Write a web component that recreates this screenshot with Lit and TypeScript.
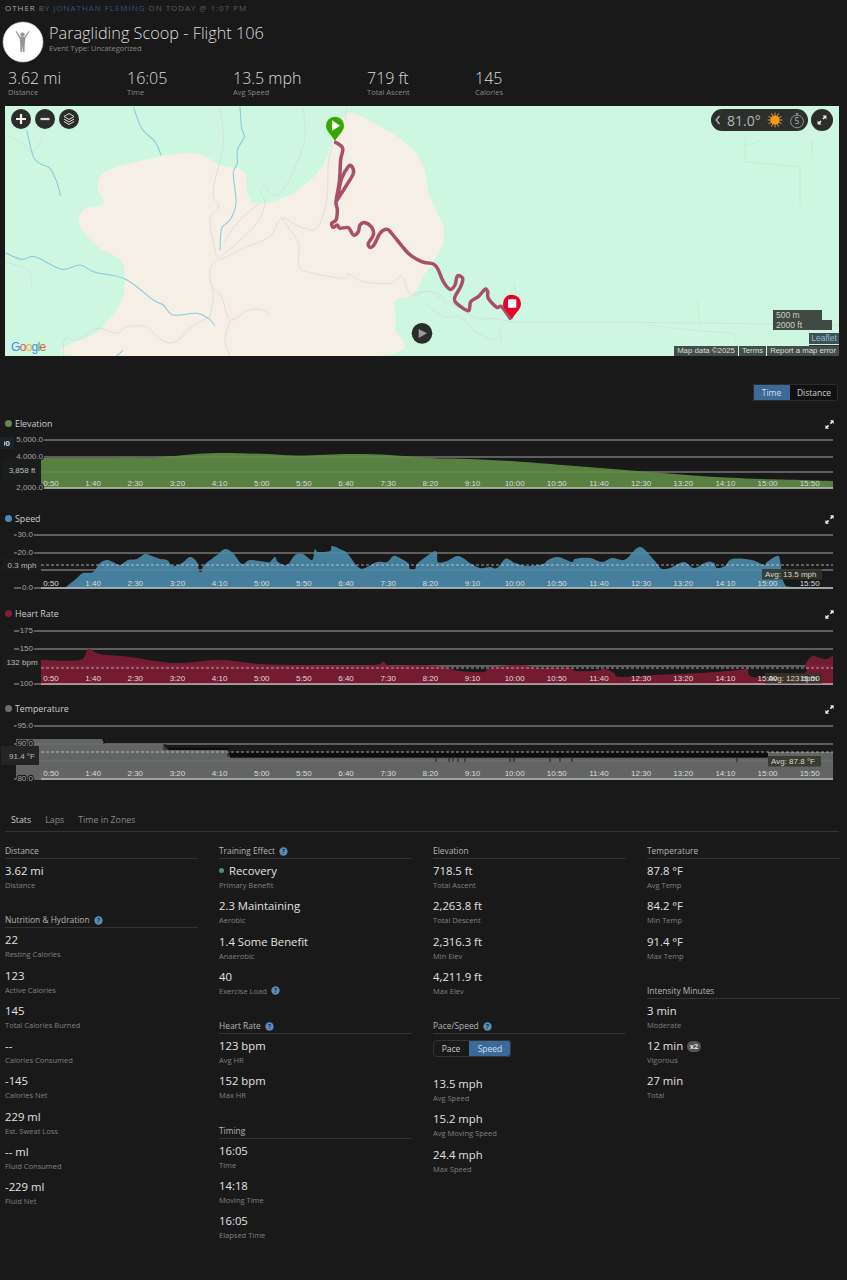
import { LitElement, css, html, svg } from 'lit'
import { customElement, property } from 'lit/decorators.js'

type Pt = [number, number]

const TICKS = ['0:50', '1:40', '2:30', '3:20', '4:10', '5:00', '5:50', '6:40', '7:30', '8:20', '9:10', '10:00', '10:50', '11:40', '12:30', '13:20', '14:10', '15:00', '15:50']

// catmull-rom through the points, traced lines in the reference are soft
const smooth = (p: Pt[], closed = false) => {
  const at = (i: number): Pt => (closed ? p[(i + p.length) % p.length] : p[Math.max(0, Math.min(p.length - 1, i))])
  let d = `M${p[0][0]} ${p[0][1]}`
  const n = closed ? p.length : p.length - 1
  for (let i = 0; i < n; i++) {
    const [p0, p1, p2, p3] = [at(i - 1), at(i), at(i + 1), at(i + 2)]
    const c1 = [p1[0] + (p2[0] - p0[0]) / 6, p1[1] + (p2[1] - p0[1]) / 6]
    const c2 = [p2[0] - (p3[0] - p1[0]) / 6, p2[1] - (p3[1] - p1[1]) / 6]
    d += `C${c1[0].toFixed(1)} ${c1[1].toFixed(1)} ${c2[0].toFixed(1)} ${c2[1].toFixed(1)} ${p2[0]} ${p2[1]}`
  }
  return closed ? d + 'Z' : d
}

const parse = (s: string): Pt[] => {
  const n = s.match(/[\d.]+/g)!.map(Number)
  const out: Pt[] = []
  for (let i = 0; i < n.length; i += 2) out.push([n[i], n[i + 1]])
  return out
}

const helpIcon = html`<svg class="help" viewBox="0 0 10 10"><circle cx="5" cy="5" r="4.6" fill="#5a8dbd"></circle><text x="5" y="7.4" text-anchor="middle" font-size="7" font-weight="700" fill="#1c2c3c" font-family="Open Sans, sans-serif">?</text></svg>`

const expandIcon = html`<svg class="expand" viewBox="0 0 10 10"><path d="M5.6 0.4H9.6V4.4L8.2 3L6.6 4.6L5.4 3.4L7 1.8ZM4.4 9.6H0.4V5.6L1.8 7L3.4 5.4L4.6 6.6L3 8.2Z" fill="#eee"></path></svg>`

@customElement('line-chart')
class LineChart extends LitElement {
  @property() name = ''
  @property() color = '#888'
  @property({ type: Array }) points: Pt[] = []
  @property({ type: Array }) grid: [number, string][] = []
  @property({ type: Boolean }) stepped = false
  @property({ type: Number }) lineStart = 14
  @property({ type: Number }) bottom = 61
  @property({ type: Number }) tickY = 56
  @property({ type: Number }) avgY = 0
  @property() avg = ''
  @property({ type: Array }) avgBox: number[] = []
  @property() cursor = ''
  @property({ type: Array }) cursorBox: number[] = []
  @property({ attribute: false }) extra: unknown = null

  render() {
    const top = this.stepped ? 'M' + this.points.map((p) => p.join(' ')).join('L') : smooth(this.points)
    const area = `${top}L833 ${this.bottom}L${this.points[0][0]} ${this.bottom}Z`
    return html`
      <div class="title"><i style="background:${this.color}"></i><span>${this.name}</span>${expandIcon}</div>
      <svg class="plot" viewBox="0 0 847 66" width="847" height="66">
        ${this.grid.map(([y]) => svg`<line x1=${this.lineStart} x2="833" y1=${y} y2=${y} class="gl"></line>`)}
        <path d=${area} fill=${this.color} fill-opacity=".9"></path>
        ${this.extra}
        <line x1="41" x2="833" y1=${this.bottom} y2=${this.bottom} class="gl strong"></line>
        ${this.avgY
          ? svg`<line x1="41" x2="833" y1=${this.avgY} y2=${this.avgY} stroke="#ddd" stroke-opacity=".7" stroke-width="1" stroke-dasharray="3 2"></line>`
          : ''}
        ${this.grid.map(([y, t]) =>
          t ? svg`<text x=${this.lineStart + 19} y=${y + 1.8} class="yl" text-anchor="end">${t}</text>` : ''
        )}
        ${this.avg
          ? svg`<rect x=${this.avgBox[0]} y=${this.avgBox[1]} width=${this.avgBox[2]} height="10.5" fill="#33342a" fill-opacity=".85"></rect>`
          : ''}
        ${TICKS.map((t, i) => svg`<text x=${51 + i * 42.15} y=${this.tickY} class="tl" text-anchor="middle">${t}</text>`)}
        ${this.avg ? svg`<text x=${this.avgBox[0] + 3} y=${this.avgBox[1] + 8} class="av">${this.avg}</text>` : ''}
        <rect x=${this.cursorBox[0]} y=${this.cursorBox[1]} width="38" height=${this.cursorBox[2]} fill=${this.cursorBox[3] ? '#232423' : '#1b1d1b'}></rect>
        <text x="22" y=${this.cursorBox[1] + this.cursorBox[2] / 2 + 3} class="cur" text-anchor="middle">${this.cursor}</text>
      </svg>
    `
  }

  static styles = css`
    :host {
      display: block;
      height: 95px;
    }
    .title {
      display: flex;
      align-items: center;
      height: 17px;
      font: 8.8px 'Open Sans', sans-serif;
      color: #ccc;
      padding-left: 5px;
      position: relative;
    }
    .title i {
      width: 7px;
      height: 7px;
      border-radius: 50%;
      margin-right: 3px;
    }
    .expand {
      position: absolute;
      left: 825px;
      top: 5px;
      width: 9px;
      height: 9px;
    }
    .plot {
      display: block;
    }
    .gl {
      stroke: #d8d8d8;
      stroke-opacity: 0.72;
      stroke-width: 1;
    }
    .strong {
      stroke-width: 1.5;
    }
    text {
      font-family: 'Liberation Sans', Arial, sans-serif;
    }
    .yl {
      font-size: 8px;
      fill: #a5a5a5;
      stroke: #191919;
      stroke-width: 2.5px;
      paint-order: stroke;
    }
    .tl {
      font-size: 8px;
      fill: #dcdcdc;
    }
    .av {
      font-size: 8px;
      fill: #d8d8d0;
    }
    .cur {
      font-size: 8px;
      fill: #bbb;
    }
  `
}

const shift = (pts: Pt[], top: number): Pt[] => pts.map(([x, y]) => [x, y - top])

const ELEV: Pt[] = [[41, 458], [100, 458], [130, 457.5], [150, 458], [173, 456], [217, 453], [267, 454], [300, 455.5], [350, 454], [390, 455], [430, 458], [470, 459], [510, 461], [550, 464], [600, 468], [650, 472], [700, 476], [760, 479], [800, 480], [833, 481]]

const SPEED: Pt[] = [[65, 588], [77, 578], [83, 573], [93, 572], [100, 563], [107, 560], [113, 562], [120, 565], [128, 560], [137, 559], [145, 554], [152, 556], [160, 559], [167, 560], [173, 566], [182, 563], [190, 557], [197, 562], [199, 571], [202, 571], [204, 565], [217, 555], [225, 549], [233, 553], [242, 564], [250, 560], [267, 562], [270, 562], [275, 557], [278, 562], [287, 565], [295, 555], [303, 554], [312, 560], [315, 549], [318, 552], [330, 551], [332, 546], [342, 550], [347, 553], [358, 567], [365, 568], [377, 562], [387, 562], [393, 556], [398, 557], [408, 563], [410, 569], [415, 569], [418, 563], [433, 552], [437, 553], [438, 562], [447, 561], [457, 556], [463, 558], [470, 563], [480, 568], [490, 567], [497, 568], [505, 559], [510, 560], [515, 563], [527, 566], [543, 564], [548, 560], [558, 557], [572, 562], [575, 559], [590, 558], [602, 562], [612, 558], [624, 560], [632, 553], [637, 548], [643, 548], [654, 560], [662, 569], [670, 568], [684, 562], [694, 568], [707, 562], [714, 563], [717, 568], [725, 566], [732, 559], [752, 560], [764, 565], [767, 562], [777, 556], [780, 560], [784, 583], [794, 587], [833, 588]]

const HEART: Pt[] = [[41, 660], [80, 660], [88, 649], [100, 654], [130, 657], [175, 663], [220, 660], [260, 664], [300, 665], [372, 665], [383, 661.5], [390, 665.5], [420, 665], [443, 667], [460, 671], [483, 672], [490, 668], [513, 665], [530, 666], [537, 668], [570, 668], [575, 671], [594, 671], [605, 669], [614, 673], [620, 677], [654, 675], [700, 673], [740, 670], [747, 668], [750, 676], [764, 677], [804, 673], [805, 665], [812, 656], [820, 658], [827, 659], [832, 656], [833, 656]]

const TEMP: Pt[] = [[16, 739], [102, 739], [105, 744], [163, 744], [168, 750], [227, 750], [230, 757.5], [767, 757.5], [768, 752], [833, 752]]

// dark band and the short marks under the temperature steps
const tempMarks = svg`
  <rect x="230" y="35" width="538" height="5.5" fill="#0d0d0d"></rect>
  <rect x="168" y="31" width="60" height="2" fill="#0d0d0d"></rect>
  ${[[104, 22, 27], [164, 27, 33], [166, 27, 33], [228, 34, 40]].map(
    ([x, a, b]) => svg`<line x1=${x} x2=${x} y1=${a} y2=${b} stroke="#151515" stroke-width="1"></line>`
  )}
  ${[436, 449, 453, 458, 465, 510, 514, 550, 560, 572, 737].map(
    (x) => svg`<line x1=${x} x2=${x} y1="40" y2="45" stroke="#222" stroke-width="1"></line>`
  )}
`

// clipped y axis label that sticks out at the left of the elevation chart
const elevMarks = svg`
  <rect x="0" y="5" width="14" height="12" fill="#16242d"></rect>
  <svg x="4" y="5" width="8" height="12"><text x="-3" y="8.8" font-size="8" font-weight="700" fill="#ddd">00</text></svg>
`

const routeMain = '107,97 128,115 122,150 118,215 108,275 112,300 108,330 95,340 100,352 112,345 120,355 145,353 160,375 175,365 180,345 195,338 215,352 220,375 205,400 210,412 222,405 240,370 260,358 275,370 325,430 365,455 400,462 415,480 430,515 450,538 465,525 472,498 488,505 482,530 465,560 468,578 505,602 512,575 535,560 555,538 563,545 565,565 590,592 605,590 630,625'
const routeLoop = '110,272 140,225 160,190 155,168 145,170 125,205 115,250'

const TAN = 'M1045 38L1150 85L1230 140L1270 200L1290 290L1330 380L1325 440L1270 530L1240 585L1185 605L1185 680L1130 768L230 768L300 690L365 600L368 490L300 445L240 380L250 330L310 310L292 255L340 205L565 158L660 195L730 215L745 290L780 310L870 285L960 210L1000 120'

const RIVERS = [
  'M80 90L100 170L122 192L150 205L170 245L182 288',
  'M400 20L425 85L465 125L483 165',
  'M720 20L725 85L733 110L712 150L712 190L700 220L708 310L690 360L665 385L660 450',
  'M15 458L65 478L105 470L185 508L240 495L285 517L375 537L460 600L490 615L520 645L590 640L625 655L645 677',
  'M350 768L368 752',
]

const ROADS = [
  'M660 20L670 130L645 240L640 290L655 320L630 360L645 450L650 470',
  'M910 25L915 110L890 190L850 270L815 285L795 258L782 275L795 310L770 370L710 430L650 480L630 510L635 560L640 590L630 650',
  'M1040 25L1035 60',
  'M1000 130L985 190L980 300L950 385L900 380L845 355L810 410L740 440L660 480',
  'M845 355L895 430L895 490L920 515L1030 535L1045 522L1090 545L1170 550L1205 530L1235 585L1290 575L1350 620',
  'M635 560L665 590L690 660L745 630L790 630L805 645',
  'M690 660L675 720L690 768',
  'M630 650L575 680L520 728L470 710L440 680L380 680L350 700L295 685L230 720L195 715L190 768',
  'M20 105L60 125L100 155L130 105L135 90',
  'M15 485L75 505L95 530L92 560',
  'M780 310L720 360L670 430',
  'M1240 580L1300 575L1370 620L1430 655L1475 655L1535 665',
  'M1275 610L1330 650L1380 650L1420 690L1480 720L1500 690L1510 670',
  'M1500 730L1505 690',
  'M1540 550L1548 575L1540 600',
  'M1530 666L2000 668L2517 675',
]

// very faint section lines on the green to the right
const FAINT = [
  'M2235 105L2235 180',
  'M2235 186L2400 200L2400 315',
  'M2235 138L2280 122',
  'M2436 120L2436 174',
  'M2091 600L2100 675',
  'M1940 675L2100 693L2200 699L2220 768',
]

type Stat = { v: string; l: string; help?: boolean; dot?: boolean; badge?: string }
type Section = { title: string; help?: boolean; items?: Stat[]; gap: number; toggle?: boolean }

const s = (v: string, l: string, extra: Partial<Stat> = {}): Stat => ({ v, l, ...extra })

const COLUMNS: Section[][] = [
  [
    { title: 'Distance', gap: 0, items: [s('3.62 mi', 'Distance')] },
    {
      title: 'Nutrition & Hydration',
      help: true,
      gap: 15,
      items: [
        s('22', 'Resting Calories'),
        s('123', 'Active Calories'),
        s('145', 'Total Calories Burned'),
        s('--', 'Calories Consumed'),
        s('-145', 'Calories Net'),
        s('229 ml', 'Est. Sweat Loss'),
        s('-- ml', 'Fluid Consumed'),
        s('-229 ml', 'Fluid Net'),
      ],
    },
  ],
  [
    {
      title: 'Training Effect',
      help: true,
      gap: 0,
      items: [
        s('Recovery', 'Primary Benefit', { dot: true }),
        s('2.3 Maintaining', 'Aerobic'),
        s('1.4 Some Benefit', 'Anaerobic'),
        s('40', 'Exercise Load', { help: true }),
      ],
    },
    { title: 'Heart Rate', help: true, gap: 15, items: [s('123 bpm', 'Avg HR'), s('152 bpm', 'Max HR')] },
    { title: 'Timing', gap: 15, items: [s('16:05', 'Time'), s('14:18', 'Moving Time'), s('16:05', 'Elapsed Time')] },
  ],
  [
    {
      title: 'Elevation',
      gap: 0,
      items: [s('718.5 ft', 'Total Ascent'), s('2,263.8 ft', 'Total Descent'), s('2,316.3 ft', 'Min Elev'), s('4,211.9 ft', 'Max Elev')],
    },
    {
      title: 'Pace/Speed',
      help: true,
      gap: 15,
      toggle: true,
      items: [s('13.5 mph', 'Avg Speed'), s('15.2 mph', 'Avg Moving Speed'), s('24.4 mph', 'Max Speed')],
    },
  ],
  [
    { title: 'Temperature', gap: 0, items: [s('87.8 °F', 'Avg Temp'), s('84.2 °F', 'Min Temp'), s('91.4 °F', 'Max Temp')] },
    {
      title: 'Intensity Minutes',
      gap: 15,
      items: [s('3 min', 'Moderate'), s('12 min', 'Vigorous', { badge: 'x2' }), s('27 min', 'Total')],
    },
  ],
]

const METRICS = [
  ['3.62 mi', 'Distance', 119],
  ['16:05', 'Time', 106],
  ['13.5 mph', 'Avg Speed', 134],
  ['719 ft', 'Total Ascent', 108],
  ['145', 'Calories', 100],
] as const

@customElement('app-root')
class AppRoot extends LitElement {
  renderMap() {
    return html`
      <div class="map">
        <svg class="canvas" viewBox="15 18 2502 750" width="834" height="250">
          <rect x="15" y="18" width="2502" height="750" fill="#cdf7e0"></rect>
          <path d=${smooth(parse(TAN), true)} fill="#f5efe6"></path>
          ${FAINT.map((d) => svg`<path d=${d} fill="none" stroke="#bfeacf" stroke-width="2"></path>`)}
          ${ROADS.map((d) => svg`<path d=${smooth(parse(d))} fill="none" stroke="#d2dcd6" stroke-width="2.2"></path>`)}
          ${RIVERS.map((d) => svg`<path d=${smooth(parse(d))} fill="none" stroke="#88cbe0" stroke-width="3.2"></path>`)}
          <g transform="translate(900 30)" fill="none" stroke="#a94f68" stroke-width="10.5" stroke-linejoin="round" stroke-linecap="round">
            <path d=${smooth(parse(routeMain))}></path>
            <path d=${smooth(parse(routeLoop))}></path>
          </g>
          <g transform="translate(1005 51)">
            <path d="M0 73C-8 54 -27 44 -27 26A27 27 0 0 1 27 26C27 44 8 54 0 73Z" fill="#37a800"></path>
            <path d="M-9 10L15 26L-9 41Z" fill="#fff"></path>
          </g>
          <g transform="translate(1536 585)">
            <path d="M0 73C-8 54 -27 44 -27 26A27 27 0 0 1 27 26C27 44 8 54 0 73Z" fill="#e8002c"></path>
            <rect x="-12" y="13" width="25" height="25" rx="2" fill="#fff"></rect>
          </g>
          <circle cx="1266" cy="700" r="31" fill="#2b2d2b"></circle>
          <path d="M1256 687L1281 700L1256 714Z" fill="#9a9a9a"></path>
        </svg>

        <div class="ctrls">
          <button>
            <svg viewBox="0 0 20 20"><path d="M10 5V15M5 10H15" stroke="#eee" stroke-width="2.2"></path></svg>
          </button>
          <button>
            <svg viewBox="0 0 20 20"><path d="M5.5 10H14.5" stroke="#ddd" stroke-width="2.2"></path></svg>
          </button>
          <button>
            <svg viewBox="0 0 20 20" fill="none" stroke="#ddd" stroke-width="1">
              <path d="M10 4.5L15 7.5L10 10.5L5 7.5Z"></path>
              <path d="M5 10L10 13L15 10"></path>
              <path d="M5 12.5L10 15.5L15 12.5"></path>
            </svg>
          </button>
        </div>

        <div class="weather">
          <svg class="chev" viewBox="0 0 6 10"><path d="M4.5 1L1.2 5L4.5 9" fill="none" stroke="#bbb" stroke-width="1.3"></path></svg>
          <span class="deg">81.0°</span>
          <svg class="sun" viewBox="0 0 16 16">
            <g stroke="#d8a04a" stroke-width=".9">
              ${[0, 30, 60, 90, 120, 150].map(
                (a) => svg`<line x1="0.6" y1="8" x2="15.4" y2="8" transform="rotate(${a} 8 8)"></line>`
              )}
            </g>
            <circle cx="8" cy="8" r="4.6" fill="#ff9a10"></circle>
          </svg>
          <span class="timer">
            <svg viewBox="0 0 16 16"><circle cx="8" cy="8.4" r="6.4" fill="none" stroke="#999" stroke-width=".9"></circle><path d="M8 .6V3" stroke="#999"></path><path d="M6.6.6H9.4" stroke="#999" stroke-width=".8"></path></svg>
            <b>5</b>
          </span>
        </div>
        <button class="full">
          <svg viewBox="0 0 10 10"><path d="M5.6 0.6H9.4V4.4L8.1 3.1L6.6 4.6L5.4 3.4L6.9 1.9ZM4.4 9.4H0.6V5.6L1.9 6.9L3.4 5.4L4.6 6.6L3.1 8.1Z" fill="#eee"></path></svg>
        </button>

        <div class="scale">
          <div style="width:49px">500 m</div>
          <div style="width:59px">2000 ft</div>
        </div>
        <div class="leaflet">Leaflet</div>
        <div class="leaflet-dark"></div>
        <div class="attrib"><span>Map data ©2025</span><span>Terms</span><span>Report a map error</span></div>
        <div class="google"><span style="color:#4a84e8">G</span><span style="color:#e0574a">o</span><span style="color:#eab53a">o</span><span style="color:#4a84e8">g</span><span style="color:#4aa864">l</span><span style="color:#e0574a">e</span></div>
      </div>
    `
  }

  render() {
    return html`
      <div class="by">
        <span class="b1">OTHER</span> <span class="b2">BY</span> <span class="b3">JONATHAN FLEMING</span>
        <span class="b2">ON TODAY @ 1:07 PM</span>
      </div>
      <div class="head">
        <svg class="avatar" viewBox="0 0 42 42">
          <circle cx="21" cy="21" r="20" fill="#fff" stroke="#ccc" stroke-width=".6"></circle>
          <circle cx="20.5" cy="13.6" r="2.2" fill="#959595"></circle>
          <path d="M13.5 10.5L17.6 17.2L18.2 22.5L18.5 31H20L20.5 24.5L21 31H22.5L22.8 22.5L23.4 17.2L27.5 10.5L26.6 10L22.6 15.8H18.4L14.4 10Z" fill="#959595"></path>
        </svg>
        <div>
          <div class="name">Paragliding Scoop - Flight 106</div>
          <div class="etype">Event Type: Uncategorized</div>
        </div>
      </div>
      <div class="metrics">
        ${METRICS.map(
          ([v, l, w]) => html`<div class="metric" style="width:${w}px"><div class="mv">${v}</div><div class="ml">${l}</div></div>`
        )}
      </div>
      ${this.renderMap()}
      <div class="switch-row">
        <div class="switch"><span class="on">Time</span><span class="off">Distance</span></div>
      </div>
      <div class="charts">
        <line-chart
          name="Elevation"
          color="#5f8c46"
          .points=${shift(ELEV, 432)}
          .grid=${[[8, '5,000.0'], [25, '4,000.0'], [40, ''], [56, '2,000.0']]}
          .lineStart=${24}
          .bottom=${56}
          .tickY=${53.5}
          .extra=${elevMarks}
          .cursorBox=${[3, 27, 21]}
          cursor="3,858 ft"
        ></line-chart>
        <line-chart
          name="Speed"
          color="#4b8bab"
          .points=${shift(SPEED, 527)}
          .grid=${[[8, '30.0'], [26, '20.0'], [43, ''], [61, '0.0']]}
          .bottom=${61}
          .tickY=${58.5}
          .avgY=${38}
          avg="Avg: 13.5 mph"
          .avgBox=${[762, 42, 60]}
          .cursorBox=${[3, 31, 13]}
          cursor="0.3 mph"
        ></line-chart>
        <line-chart
          name="Heart Rate"
          color="#801c34"
          .points=${shift(HEART, 622)}
          .grid=${[[9, '175'], [27, '150'], [44, ''], [62, '100']]}
          .bottom=${62}
          .tickY=${58.5}
          .avgY=${46}
          avg="Avg: 123 bpm"
          .avgBox=${[765, 51, 57]}
          .cursorBox=${[3, 33, 13]}
          cursor="132 bpm"
        ></line-chart>
        <line-chart
          name="Temperature"
          color="#6c6e6e"
          stepped
          .points=${shift(TEMP, 717)}
          .grid=${[[9, '95.0'], [27, '90.0'], [44, ''], [62, '80.0']]}
          .extra=${tempMarks}
          .bottom=${62}
          .tickY=${59}
          .avgY=${35}
          avg="Avg: 87.8 °F"
          .avgBox=${[768, 39, 53]}
          .cursorBox=${[1, 29, 19, 1]}
          cursor="91.4 °F"
        ></line-chart>
      </div>
      <div class="tabs"><span class="cur">Stats</span><span>Laps</span><span>Time in Zones</span></div>
      <div class="stats">
        ${COLUMNS.map(
          (col) => html`<div class="col">
            ${col.map(
              (sec) => html`<section style="margin-top:${sec.gap}px">
                <h3>${sec.title}${sec.help ? helpIcon : ''}</h3>
                ${sec.toggle
                  ? html`<div class="pace"><span>Pace</span><span class="on">Speed</span></div>`
                  : ''}
                ${sec.items?.map(
                  (it) => html`<div class="stat">
                    <div class="v">
                      ${it.dot ? html`<i class="dot"></i>` : ''}${it.v}${it.badge ? html`<em>${it.badge}</em>` : ''}
                    </div>
                    <div class="l">${it.l}${it.help ? helpIcon : ''}</div>
                  </div>`
                )}
              </section>`
            )}
          </div>`
        )}
      </div>
    `
  }

  static styles = css`
    :host {
      display: block;
      min-height: 1280px;
      background: #191919;
      font-family: 'Open Sans', sans-serif;
      color: #ddd;
      overflow: hidden;
    }
    .by {
      height: 15px;
      line-height: 15px;
      padding-left: 5px;
      font-size: 8px;
      letter-spacing: 0.95px;
      white-space: nowrap;
    }
    .b1 {
      color: #a8a8a8;
    }
    .b2 {
      color: #5e5e5e;
    }
    .b3 {
      color: #2b5586;
    }
    .head {
      display: flex;
      gap: 4px;
      margin-top: 6px;
      padding-left: 2px;
    }
    .avatar {
      width: 42px;
      height: 42px;
      flex: none;
    }
    .name {
      margin: 2px 0 0 1px;
      font-size: 16.3px;
      line-height: 20px;
      font-weight: 300;
      color: #ddd;
      white-space: nowrap;
    }
    .etype {
      margin-left: 1px;
      font-size: 7.5px;
      line-height: 10px;
      color: #888;
    }
    .metrics {
      display: flex;
      padding-left: 8px;
      margin-top: 4px;
    }
    .mv {
      font-size: 16px;
      line-height: 22px;
      font-weight: 300;
      color: #ddd;
    }
    .ml {
      margin-top: -2px;
      font-size: 7.5px;
      line-height: 10px;
      color: #888;
    }
    .map {
      position: relative;
      width: 834px;
      height: 250px;
      margin: 9px 0 0 5px;
      overflow: hidden;
    }
    .canvas {
      display: block;
    }
    .ctrls {
      position: absolute;
      left: 6px;
      top: 3px;
      display: flex;
      gap: 4px;
    }
    button {
      width: 20px;
      height: 20px;
      padding: 0;
      border: 0;
      border-radius: 50%;
      background: #2b2d2b;
    }
    button svg {
      display: block;
    }
    .weather {
      position: absolute;
      left: 706px;
      top: 3px;
      width: 97px;
      height: 22px;
      border-radius: 11px;
      background: #2d2f2d;
      display: flex;
      align-items: center;
      color: #b5b5b5;
    }
    .chev {
      width: 6px;
      height: 10px;
      margin-left: 4px;
    }
    .deg {
      font-size: 14px;
      margin-left: 6px;
      width: 37px;
    }
    .sun {
      width: 16px;
      height: 16px;
      margin-left: 3px;
    }
    .timer {
      position: relative;
      width: 16px;
      height: 16px;
      margin-left: 6px;
    }
    .timer svg {
      width: 16px;
      height: 16px;
    }
    .timer b {
      position: absolute;
      inset: 1px 0 0 0;
      text-align: center;
      font-size: 8.5px;
      line-height: 16px;
      font-weight: 400;
      color: #bbb;
    }
    .full {
      position: absolute;
      left: 806px;
      top: 3px;
      width: 22px;
      height: 22px;
      display: flex;
      align-items: center;
      justify-content: center;
    }
    .full svg {
      width: 10px;
      height: 10px;
    }
    .scale {
      position: absolute;
      left: 768px;
      top: 204px;
      font: 8.5px 'Liberation Sans', sans-serif;
      color: #ccc;
    }
    .scale div {
      box-sizing: border-box;
      height: 10px;
      line-height: 10px;
      padding-left: 3px;
      background: #404a42;
    }
    .leaflet {
      position: absolute;
      right: 0;
      top: 227px;
      width: 30px;
      height: 11px;
      text-align: center;
      font: 8.5px/11px 'Liberation Sans', sans-serif;
      color: #8fc0d8;
      background: #3f4f55;
    }
    .leaflet-dark {
      position: absolute;
      right: 0;
      top: 239px;
      width: 30px;
      height: 2px;
      background: #2b2f2d;
    }
    .attrib {
      position: absolute;
      right: 0;
      bottom: 0;
      height: 10px;
      display: flex;
      gap: 1px;
      font: 7.8px/10px 'Liberation Sans', sans-serif;
      color: #ddd;
      background: #cdf7e0;
      padding-left: 1px;
    }
    .attrib span {
      padding: 0 3px;
      background: #434e49;
    }
    .google {
      position: absolute;
      left: 6px;
      bottom: 1px;
      font: 12px/15px 'Liberation Sans', sans-serif;
      letter-spacing: -0.7px;
    }
    .switch-row {
      display: flex;
      justify-content: flex-end;
      padding-right: 9px;
      margin-top: 28px;
    }
    .switch {
      display: flex;
      height: 17px;
      font-size: 8.5px;
      line-height: 17px;
      border-radius: 2px;
      overflow: hidden;
      background: #111;
      outline: 1px solid #2c2c2c;
      outline-offset: -1px;
      color: #ccc;
    }
    .switch .on {
      width: 37px;
      text-align: center;
      background: #3a6a97;
      color: #dde;
    }
    .switch .off {
      width: 48px;
      text-align: center;
    }
    .charts {
      margin-top: 14px;
    }
    .tabs {
      display: flex;
      gap: 14px;
      margin: 17px 8px 0 5px;
      padding: 0 0 3px 6px;
      height: 16px;
      line-height: 16px;
      font-size: 8.8px;
      color: #888;
      border-bottom: 1px solid #333;
    }
    .tabs .cur {
      color: #ccc;
    }
    .stats {
      display: grid;
      grid-template-columns: repeat(4, 193px);
      column-gap: 21px;
      padding: 12px 0 0 5px;
    }
    h3 {
      margin: 0;
      height: 14px;
      line-height: 14px;
      font-size: 8.4px;
      font-weight: 400;
      color: #b5b5b5;
      border-bottom: 1px solid #333;
      display: flex;
      align-items: center;
      white-space: nowrap;
    }
    .help {
      width: 9px;
      height: 9px;
      margin-left: 4px;
      vertical-align: -1px;
    }
    .stat {
      height: 35.3px;
    }
    section h3 + .stat {
      margin-top: 4px;
    }
    .v {
      font-size: 11.3px;
      line-height: 16px;
      color: #e2e2e2;
      white-space: nowrap;
    }
    .l {
      font-size: 7.5px;
      line-height: 12px;
      color: #808080;
      white-space: nowrap;
    }
    .dot {
      display: inline-block;
      width: 5px;
      height: 5px;
      border-radius: 50%;
      background: #4f8f78;
      margin-right: 5px;
      vertical-align: 2px;
    }
    em {
      display: inline-block;
      font-style: normal;
      font-size: 7.5px;
      line-height: 11px;
      font-weight: 700;
      width: 14px;
      text-align: center;
      border-radius: 6px;
      background: #555;
      color: #ddd;
      margin-left: 4px;
      vertical-align: 1.5px;
    }
    .pace {
      display: flex;
      width: 78px;
      height: 17px;
      margin: 6px 0 19px;
      font-size: 8.5px;
      line-height: 17px;
      text-align: center;
      border-radius: 4px;
      overflow: hidden;
      outline: 1px solid #333;
      outline-offset: -1px;
      color: #ccc;
    }
    .pace span {
      flex: 0 0 36px;
    }
    .pace .on {
      flex: 1;
      background: #3a6a97;
      color: #cfe0ee;
    }
    .pace + .stat {
      margin-top: 0;
    }
  `
}
